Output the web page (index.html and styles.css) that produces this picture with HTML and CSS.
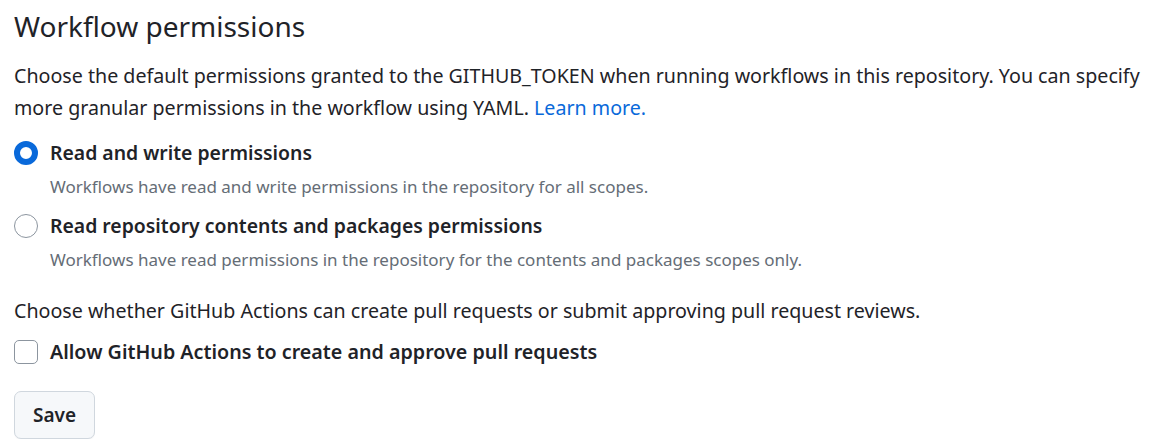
FILE: index.html
```html
<!DOCTYPE html>
<html>
<head>
<meta charset="utf-8">
<link rel="stylesheet" href="styles.css">
</head>
<body>
<div class="page">
  <h2 class="title">Workflow permissions</h2>
  <p class="intro">Choose the default permissions granted to the GITHUB_TOKEN when running workflows in this repository. You can specify more granular permissions in the workflow using YAML. <a href="#" class="link">Learn more.</a></p>

  <div class="option">
    <label class="option-row">
      <span class="radio checked"></span>
      <span class="option-label">Read and write permissions</span>
    </label>
    <div class="option-note">Workflows have read and write permissions in the repository for all scopes.</div>
  </div>

  <div class="option">
    <label class="option-row">
      <span class="radio"></span>
      <span class="option-label">Read repository contents and packages permissions</span>
    </label>
    <div class="option-note">Workflows have read permissions in the repository for the contents and packages scopes only.</div>
  </div>

  <p class="intro second">Choose whether GitHub Actions can create pull requests or submit approving pull request reviews.</p>

  <label class="option-row check-row">
    <span class="checkbox"></span>
    <span class="option-label wide">Allow GitHub Actions to create and approve pull requests</span>
  </label>

  <button class="save">Save</button>
</div>
</body>
</html>
```

FILE: styles.css
```css
html, body {
  margin: 0;
  padding: 0;
  background: #ffffff;
}
body {
  font-family: "Noto Sans", "Open Sans", sans-serif;
  color: #1f2328;
}
.page {
  padding: 6px 0 0 14px;
  display: flex;
  flex-direction: column;
  align-items: flex-start;
}
.title {
  margin: 0;
  font-size: 28px;
  font-weight: 400;
  line-height: 40px;
}
.intro {
  margin: 14px 0 0 0;
  font-size: 19.65px;
  line-height: 32px;
}
.link {
  color: #0969da;
  text-decoration: none;
}
.option {
  margin-top: 14px;
}
.option + .option {
  margin-top: 10px;
}
.option-row {
  display: flex;
  align-items: center;
  gap: 12px;
}
.radio {
  width: 24px;
  height: 24px;
  box-sizing: border-box;
  border-radius: 50%;
  border: 1px solid #8c959f;
  background: #fff;
  flex: none;
}
.radio.checked {
  border: 6px solid #0969da;
}
.option-label {
  font-size: 19.4px;
  font-weight: 600;
  line-height: 30px;
}
.option-label.wide {
  font-size: 19.7px;
}
.option-note {
  margin-left: 36px;
  font-size: 17px;
  line-height: 28px;
  color: #656d76;
  margin-top: 5px;
}
.intro.second {
  margin-top: 21px;
}
.check-row {
  margin-top: 10px;
}
.checkbox {
  width: 24px;
  height: 24px;
  box-sizing: border-box;
  border: 1px solid #8c959f;
  border-radius: 5px;
  background: #fff;
  flex: none;
}
.save {
  margin-top: 24px;
  font-family: inherit;
  font-size: 19px;
  font-weight: 600;
  color: #1f2328;
  background: #f6f8fa;
  border: 1px solid #d0d7de;
  border-radius: 7px;
  padding: 0 18px;
  height: 48px;
  box-shadow: 0 1px 0 rgba(31,35,40,0.04);
}
```
